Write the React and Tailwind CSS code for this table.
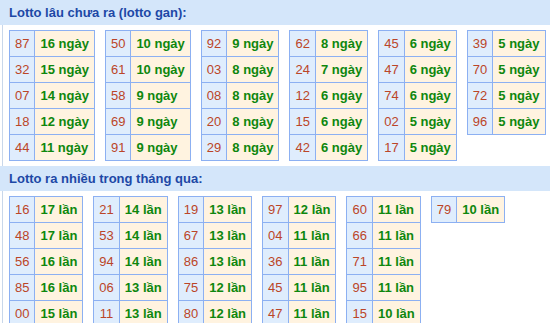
const gan = [
  [["87", 16], ["32", 15], ["07", 14], ["18", 12], ["44", 11]],
  [["50", 10], ["61", 10], ["58", 9], ["69", 9], ["91", 9]],
  [["92", 9], ["03", 8], ["08", 8], ["20", 8], ["29", 8]],
  [["62", 8], ["24", 7], ["12", 6], ["15", 6], ["42", 6]],
  [["45", 6], ["47", 6], ["74", 6], ["02", 5], ["17", 5]],
  [["39", 5], ["70", 5], ["72", 5], ["96", 5]],
];

const nhieu = [
  [["16", 17], ["48", 17], ["56", 16], ["85", 16], ["00", 15]],
  [["21", 14], ["53", 14], ["94", 14], ["06", 13], ["11", 13]],
  [["19", 13], ["67", 13], ["86", 13], ["75", 12], ["80", 12]],
  [["97", 12], ["04", 11], ["36", 11], ["45", 11], ["47", 11]],
  [["60", 11], ["66", 11], ["71", 11], ["95", 11], ["15", 10]],
  [["79", 10]],
];

function Table({ rows, unit }) {
  return (
    <table className="border-collapse">
      <tbody>
        {rows.map(([n, v]) => (
          <tr key={n}>
            <td className="border border-[#8cb0f2] bg-[#dfedfd] px-[5px] py-[5px] text-center text-[13px] leading-[15px] text-[#bb4528]">
              {n}
            </td>
            <td className="border border-[#8cb0f2] bg-[#fff3e0] px-[5px] py-[5px] text-left text-[13px] font-bold leading-[15px] text-[#0e870e] whitespace-nowrap">
              {v} {unit}
            </td>
          </tr>
        ))}
      </tbody>
    </table>
  );
}

function Header({ children }) {
  return (
    <div className="h-[25px] bg-[#d4e6fa] pl-[9px] text-[13px] font-bold leading-[25px] text-[#1d48a6]">
      {children}
    </div>
  );
}

export default function App() {
  return (
    <div
      className="w-[550px] h-[323px] overflow-hidden bg-white"
      style={{ fontFamily: '"Liberation Sans", Arial, sans-serif' }}
    >
      <Header>Lotto lâu chưa ra (lotto gan):</Header>
      <div className="ml-[2px] border-l border-[#c8d7ea] pl-[6px] pt-[5px] pb-[5px]">
        <div className="flex items-start gap-[10px]">
          {gan.map((t, i) => (
            <Table key={i} rows={t} unit="ngày" />
          ))}
        </div>
      </div>
      <Header>Lotto ra nhiều trong tháng qua:</Header>
      <div className="ml-[2px] border-l border-[#c8d7ea] pl-[6px] pt-[5px]">
        <div className="flex items-start gap-[10px]">
          {nhieu.map((t, i) => (
            <Table key={i} rows={t} unit="lần" />
          ))}
        </div>
      </div>
    </div>
  );
}
